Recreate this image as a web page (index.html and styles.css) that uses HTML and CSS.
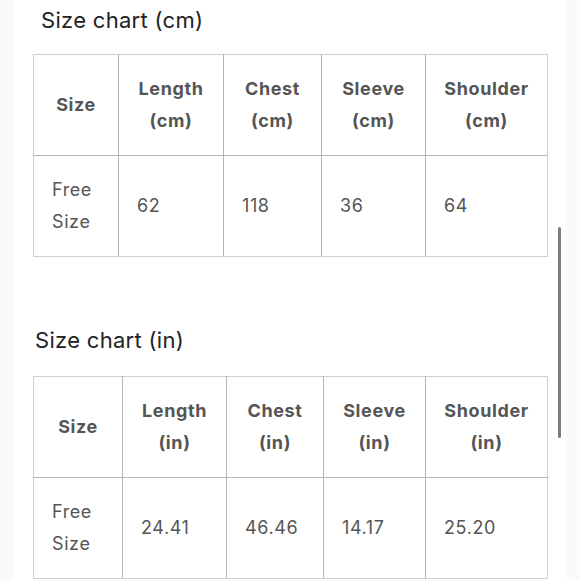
FILE: index.html
```html
<!DOCTYPE html>
<html>
<head>
<meta charset="utf-8">
<link rel="stylesheet" href="styles.css">
</head>
<body>
<div class="page">
  <div class="gutter"></div>
  <main class="main">
    <section class="chart chart-cm">
      <h2 class="title">Size chart (cm)</h2>
      <table class="table">
        <colgroup>
          <col class="w-size"><col class="w-len"><col class="w-chest"><col class="w-sleeve"><col class="w-shoulder">
        </colgroup>
        <tr class="head">
          <th>Size</th><th>Length<br>(cm)</th><th>Chest<br>(cm)</th><th>Sleeve<br>(cm)</th><th>Shoulder<br>(cm)</th>
        </tr>
        <tr class="row">
          <td>Free<br>Size</td><td>62</td><td>118</td><td>36</td><td>64</td>
        </tr>
      </table>
    </section>
    <section class="chart chart-in">
      <h2 class="title">Size chart (in)</h2>
      <table class="table">
        <colgroup>
          <col class="w-size"><col class="w-len"><col class="w-chest"><col class="w-sleeve"><col class="w-shoulder">
        </colgroup>
        <tr class="head">
          <th>Size</th><th>Length<br>(in)</th><th>Chest<br>(in)</th><th>Sleeve<br>(in)</th><th>Shoulder<br>(in)</th>
        </tr>
        <tr class="row">
          <td>Free<br>Size</td><td>24.41</td><td>46.46</td><td>14.17</td><td>25.20</td>
        </tr>
      </table>
    </section>
  </main>
  <div class="gutter gutter-right"></div>
  <div class="scrollbar"></div>
</div>
</body>
</html>
```

FILE: styles.css
```css
html, body {
  margin: 0;
  padding: 0;
  background: #ffffff;
}
body {
  font-family: Inter, "Noto Sans", "Liberation Sans", sans-serif;
  color: #555;
}
.page {
  position: relative;
  display: flex;
  width: 580px;
  height: 580px;
  overflow: hidden;
}
.gutter {
  width: 14px;
  flex: none;
  background: #f9f9f9;
}
.main {
  flex: 1;
  padding-left: 19px;
}
.chart-cm {
  padding-top: 6px;
}
.chart-in {
  padding-top: 69px;
}
.title {
  margin: 0;
  font-size: 22px;
  font-weight: 400;
  line-height: 28px;
  color: #222;
  letter-spacing: 0.3px;
}
.chart-cm .title {
  padding-left: 8px;
  margin-bottom: 20px;
}
.chart-in .title {
  padding-left: 2px;
  margin-bottom: 22px;
}
.table {
  border-collapse: collapse;
  table-layout: fixed;
  width: 515px;
  border: 1px solid #cfcfcf;
}
.table th, .table td {
  border: 1px solid #b5b5b5;
  height: 100px;
  padding: 0 18px;
  font-size: 18px;
  line-height: 32px;
  letter-spacing: 0.6px;
  vertical-align: middle;
}
.table th {
  font-weight: 700;
  text-align: center;
  color: #555;
}
.table td {
  font-weight: 400;
  text-align: left;
  color: #555;
}
.table tr:first-child th { border-top-color: #cfcfcf; }
.table th:first-child, .table td:first-child { border-left-color: #cfcfcf; }
.table th:last-child, .table td:last-child { border-right-color: #cfcfcf; }
.table tr:last-child td { border-bottom-color: #cfcfcf; }

.chart-cm .w-size { width: 85px; }
.chart-cm .w-len { width: 105px; }
.chart-cm .w-chest { width: 98px; }
.chart-cm .w-sleeve { width: 104px; }
.chart-cm .w-shoulder { width: 122px; }

.chart-in .w-size { width: 89px; }
.chart-in .w-len { width: 104px; }
.chart-in .w-chest { width: 97px; }
.chart-in .w-sleeve { width: 102px; }
.chart-in .w-shoulder { width: 122px; }

.gutter-right {
  background: #fafafa;
}
.scrollbar {
  position: absolute;
  left: 558px;
  top: 227px;
  width: 3px;
  height: 211px;
  border-radius: 2px;
  background: #7d7d7d;
}
```
